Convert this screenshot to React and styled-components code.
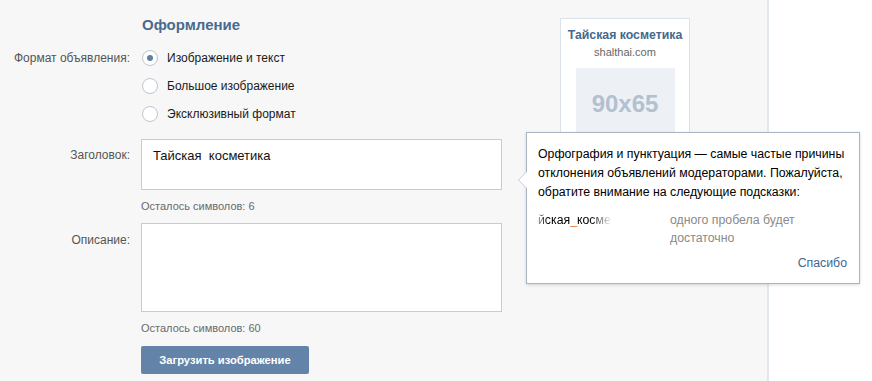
import React from "react";
import styled, { createGlobalStyle } from "styled-components";

const GlobalStyle = createGlobalStyle`
  html, body {
    margin: 0;
    padding: 0;
    background: #ffffff;
  }
  body {
    font-family: "Liberation Sans", Arial, sans-serif;
    -webkit-font-smoothing: antialiased;
  }
`;

const formats = ["Изображение и текст", "Большое изображение", "Эксклюзивный формат"];

const App = () => {
  return (
    <Page>
      <GlobalStyle />
      <Panel>
        <Layout>
          <Form>
            <Blank />
            <Heading>Оформление</Heading>

            <Label $top={0} $lh={28}>Формат объявления:</Label>
            <RadioGroup>
              {formats.map((f, i) => (
                <RadioRow key={f}>
                  <Radio $checked={i === 0} />
                  <span>{f}</span>
                </RadioRow>
              ))}
            </RadioGroup>

            <Label $top={8} $lh={16} $gap={11}>Заголовок:</Label>
            <Field $gap={11}>
              <TitleBox>Тайская&nbsp; косметика</TitleBox>
              <Counter>Осталось символов: 6</Counter>
            </Field>

            <Label $top={9} $lh={16} $gap={10}>Описание:</Label>
            <Field $gap={10}>
              <TextArea />
              <Counter>Осталось символов: 60</Counter>
              <UploadButton>Загрузить изображение</UploadButton>
            </Field>
          </Form>

          <PreviewCard>
            <PreviewTitle>Тайская косметика</PreviewTitle>
            <PreviewDomain>shalthai.com</PreviewDomain>
            <Placeholder>90x65</Placeholder>
          </PreviewCard>
        </Layout>

        <Tip>
          <TipText>
            Орфография и пунктуация — самые частые причины отклонения объявлений
            модераторами. Пожалуйста, обратите внимание на следующие подсказки:
          </TipText>
          <HintRow>
            <HintSample>
              йская<Mark>_</Mark>косме
            </HintSample>
            <HintNote>одного пробела будет достаточно</HintNote>
          </HintRow>
          <TipFooter>
            <TipLink>Спасибо</TipLink>
          </TipFooter>
        </Tip>
      </Panel>
      <Side />
    </Page>
  );
};

const Page = styled.div`
  display: flex;
  height: 381px;
  overflow: hidden;
`;

const Panel = styled.div`
  position: relative;
  width: 769px;
  flex-shrink: 0;
  background: #f7f7f7;
  border-right: 2px solid #e2e7ee;
  box-sizing: border-box;
`;

const Side = styled.div`
  flex: 1;
  background: #ffffff;
`;

const Layout = styled.div`
  display: flex;
  gap: 58px;
  padding-top: 16px;
`;

const Form = styled.div`
  display: grid;
  grid-template-columns: 130px 361px;
  column-gap: 11px;
  align-content: start;
`;

const Blank = styled.div``;

const Heading = styled.div`
  font-size: 15px;
  font-weight: bold;
  line-height: 18px;
  color: #4a6a8f;
  margin-bottom: 10px;
  padding-left: 1px;
`;

const Label = styled.div`
  text-align: right;
  font-size: 12px;
  color: #555555;
  line-height: ${(p) => p.$lh}px;
  padding-top: ${(p) => p.$top}px;
  margin-top: ${(p) => p.$gap || 0}px;
`;

const RadioGroup = styled.div`
  display: flex;
  flex-direction: column;
`;

const RadioRow = styled.div`
  display: flex;
  align-items: center;
  height: 28px;
  gap: 9px;
  font-size: 12px;
  color: #1a1a1a;
  padding-left: 1px;
`;

const Radio = styled.span`
  width: 14px;
  height: 14px;
  border-radius: 50%;
  border: 1px solid #bcc6d2;
  background: #ffffff;
  display: flex;
  align-items: center;
  justify-content: center;

  &::after {
    content: "";
    display: ${(p) => (p.$checked ? "block" : "none")};
    width: 6px;
    height: 6px;
    border-radius: 50%;
    background: #5f7fa4;
  }
`;

const Field = styled.div`
  display: flex;
  flex-direction: column;
  align-items: flex-start;
  margin-top: ${(p) => p.$gap || 0}px;
`;

const TitleBox = styled.div`
  box-sizing: border-box;
  width: 361px;
  height: 51px;
  border: 1px solid #c5ccd4;
  background: #ffffff;
  padding: 8px 11px;
  font-size: 13px;
  line-height: 16px;
  color: #111111;
`;

const TextArea = styled.div`
  box-sizing: border-box;
  width: 361px;
  height: 89px;
  border: 1px solid #c5ccd4;
  background: #ffffff;
`;

const Counter = styled.div`
  margin-top: 9px;
  font-size: 11px;
  line-height: 14px;
  color: #6a6a6a;
`;

const UploadButton = styled.button`
  margin-top: 11px;
  width: 168px;
  height: 28px;
  border: none;
  border-radius: 2px;
  background: #6383a8;
  color: #ffffff;
  font-family: inherit;
  font-size: 11.2px;
  font-weight: bold;
  padding: 0;
`;

const PreviewCard = styled.div`
  margin-top: 2px;
  width: 130px;
  box-sizing: border-box;
  border: 1px solid #dae1e8;
  background: #ffffff;
  display: flex;
  flex-direction: column;
  align-items: center;
  padding: 9px 0 14px;
  align-self: flex-start;
`;

const PreviewTitle = styled.div`
  font-size: 12.3px;
  font-weight: bold;
  line-height: 15px;
  color: #45688e;
`;

const PreviewDomain = styled.div`
  font-size: 11px;
  line-height: 15px;
  color: #666666;
  margin-top: 2px;
`;

const Placeholder = styled.div`
  margin-top: 8px;
  width: 99px;
  height: 72px;
  background: #edf1f5;
  color: #b3c0d0;
  font-size: 24px;
  font-weight: bold;
  display: flex;
  align-items: center;
  justify-content: center;
`;

const Tip = styled.div`
  position: absolute;
  left: 526px;
  top: 132px;
  width: 334px;
  height: 152px;
  box-sizing: border-box;
  background: #ffffff;
  border: 1px solid #a9b5c2;
  box-shadow: 0 1px 3px rgba(0, 0, 0, 0.15);
  padding: 12px 11px 0 11px;
  z-index: 5;

  &::before,
  &::after {
    content: "";
    position: absolute;
    top: 38px;
    border-style: solid;
    border-color: transparent;
  }
  &::before {
    left: -9px;
    border-width: 9px 9px 9px 0;
    border-right-color: #c3ccd6;
  }
  &::after {
    left: -8px;
    border-width: 9px 9px 9px 0;
    border-right-color: #ffffff;
  }
`;

const TipText = styled.div`
  font-size: 12.3px;
  line-height: 19px;
  color: #000000;
`;

const HintRow = styled.div`
  display: flex;
  margin-top: 9px;
  gap: 60px;
`;

const HintSample = styled.div`
  width: 72px;
  flex-shrink: 0;
  overflow: hidden;
  white-space: nowrap;
  font-size: 12.3px;
  line-height: 18px;
  color: #000;
  mask-image: linear-gradient(to right, rgba(0,0,0,0.4) 0, #000 10px, #000 52px, rgba(0,0,0,0.1) 72px);
  -webkit-mask-image: linear-gradient(to right, rgba(0,0,0,0.4) 0, #000 10px, #000 52px, rgba(0,0,0,0.1) 72px);
`;

const Mark = styled.span`
  color: #e07b3a;
`;

const HintNote = styled.div`
  width: 150px;
  font-size: 12.3px;
  line-height: 18px;
  color: #8a8a8a;
`;

const TipFooter = styled.div`
  display: flex;
  justify-content: flex-end;
  margin-top: 7px;
  padding-right: 1px;
`;

const TipLink = styled.span`
  font-size: 12.3px;
  line-height: 18px;
  color: #3f6591;
`;

export default App;
